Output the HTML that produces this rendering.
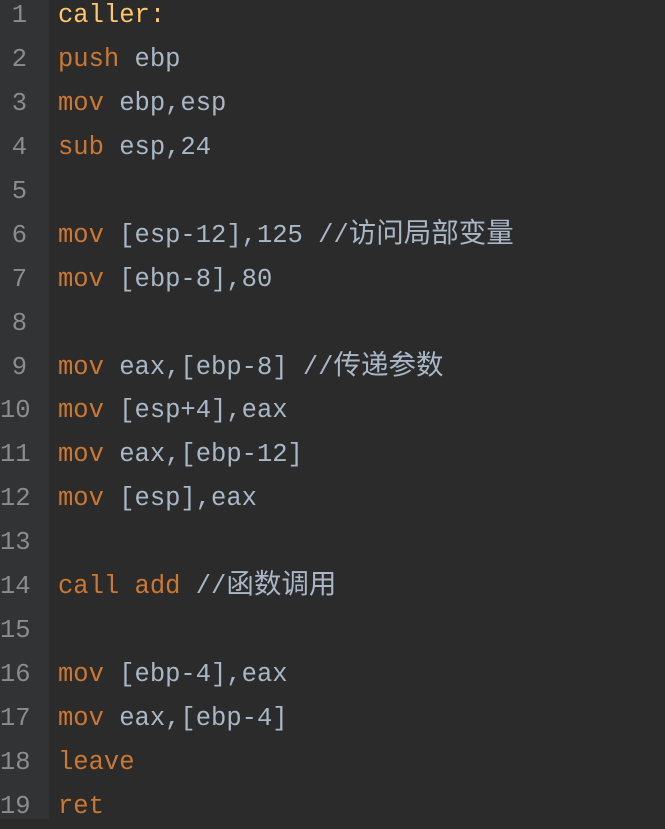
<!DOCTYPE html>
<html><head><meta charset="utf-8"><style>
html,body{margin:0;padding:0;background:#2b2b2b;width:665px;height:819px;overflow:hidden}
.g{position:absolute;left:0;top:0;width:49px;height:819px;background:#313335}
.l{position:absolute;left:0;height:44px;line-height:44px;font-family:"Liberation Mono","Noto Sans CJK SC",monospace;font-size:25.5px;white-space:pre;color:#a9b7c6}
.n{width:27px;text-align:right;color:#8c8c8c;left:0}
.c{left:58px}
.k{color:#cc7832}.y{color:#ffc66d}
.z{font-family:"Noto Sans CJK SC",sans-serif;font-size:27.5px;line-height:0}
</style></head><body><div class="g"></div>
<div id="w"></div>
<script>
var L=['<span class="y">caller:</span>','<span class="k">push</span> ebp','<span class="k">mov</span> ebp,esp','<span class="k">sub</span> esp,24','','<span class="k">mov</span> [esp-12],125 //<span class="z">访问局部变量</span>','<span class="k">mov</span> [ebp-8],80','','<span class="k">mov</span> eax,[ebp-8] //<span class="z">传递参数</span>','<span class="k">mov</span> [esp+4],eax','<span class="k">mov</span> eax,[ebp-12]','<span class="k">mov</span> [esp],eax','','<span class="k">call</span> <span class="k">add</span> //<span class="z">函数调用</span>','','<span class="k">mov</span> [ebp-4],eax','<span class="k">mov</span> eax,[ebp-4]','<span class="k">leave</span>','<span class="k">ret</span>'];
var h='';for(var i=0;i<L.length;i++){var t=-6+i*43.94;h+='<div class="l n" style="top:'+t+'px">'+(i+1)+'</div><div class="l c" style="top:'+t+'px">'+L[i]+'</div>';}
document.getElementById('w').innerHTML=h;
</script>
</body></html>
